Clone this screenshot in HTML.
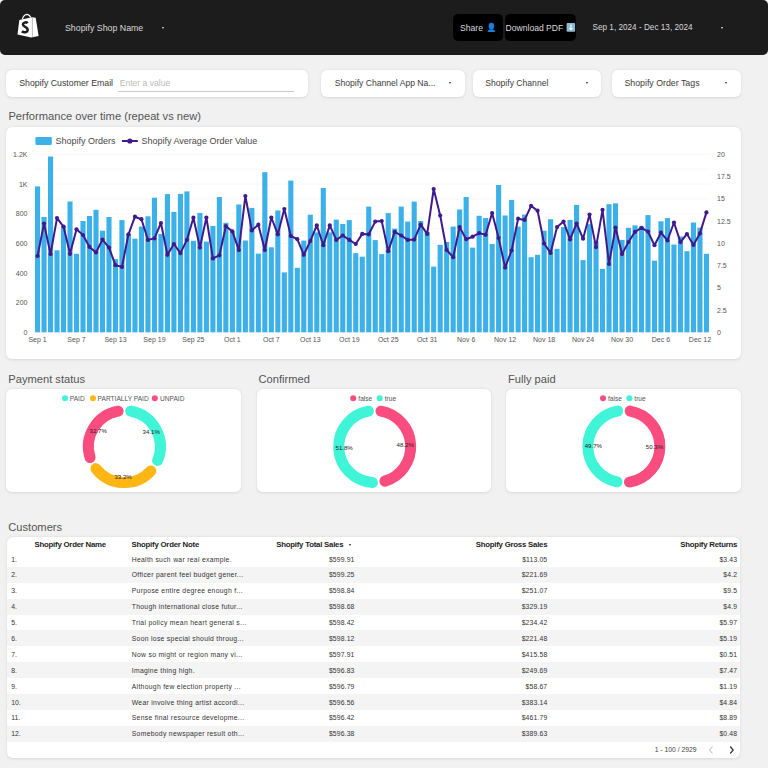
<!DOCTYPE html>
<html><head><meta charset="utf-8"><style>
*{margin:0;padding:0;box-sizing:border-box}
html,body{width:768px;height:768px;overflow:hidden;background:#f1f1f1;font-family:"Liberation Sans", sans-serif;color:#333}
.abs{position:absolute}
.hdr{position:absolute;left:0;top:0;width:768px;height:54.5px;background:#1c1c1c;border-radius:5px}
.htxt{position:absolute;color:#d8d8d8;font-size:8.6px;white-space:nowrap}
.btn{position:absolute;background:#000;border-radius:5px;top:13.8px;height:27px}
.card{position:absolute;background:#fff;border-radius:6px;box-shadow:0 0.5px 3px rgba(0,0,0,0.11)}
.ftxt{position:absolute;font-size:8.6px;color:#3a3a3a;white-space:nowrap}
.caret{position:absolute;width:0;height:0;border-left:2.2px solid transparent;border-right:2.2px solid transparent;border-top:2.6px solid #222}
.title{position:absolute;font-size:11.15px;color:#555;white-space:nowrap}
.row{position:absolute;left:6.75px;width:733.25px;height:15.89px;font-size:6.8px;color:#333}
.row span{position:absolute;top:4.5px;white-space:nowrap}
.num{left:4.5px}
.note{left:125px;letter-spacing:0.3px}
.tot{right:385.5px;letter-spacing:0.15px}
.gross{right:192.7px;letter-spacing:0.15px}
.ret{right:2.8px;letter-spacing:0.15px}
.th{position:absolute;top:539.8px;font-size:7.8px;letter-spacing:-0.22px;font-weight:bold;color:#222;white-space:nowrap}
</style></head><body>
<div class="hdr"></div>
<svg class="abs" style="left:0;top:0" width="60" height="60" viewBox="0 0 60 60">
<path d="M22.3,19.3 C23.2,16.3 24.8,14.4 26.8,14.3 C28.6,14.3 29.9,15.5 30.8,17.5" fill="none" stroke="#fff" stroke-width="1.2"/>
<path d="M19.3,19.9 L32.0,17.2 L35.7,17.8 L38.6,36.0 L31.2,37.4 L17.5,34.6 Z" fill="#fff"/>
<path d="M32.35,17.6 L32.35,37.2" stroke="#a8a8a8" stroke-width="0.8"/>
<path d="M27.7,23.2 C26.6,22.0 23.3,21.9 22.9,24.3 C22.5,26.6 27.9,27.0 27.7,30.0 C27.5,32.7 23.7,32.9 21.9,31.3" fill="none" stroke="#1c1c1c" stroke-width="2.5"/>
</svg>
<div class="htxt" style="left:65px;top:22.5px;font-size:8.8px">Shopify Shop Name</div>
<div class="caret" style="left:161.5px;top:26.8px;border-top-color:#e8e8e8;border-left-width:1.8px;border-right-width:1.8px;border-top-width:2.2px"></div>
<div class="btn" style="left:452.7px;width:50.8px"></div>
<div class="btn" style="left:504.8px;width:70.9px"></div>
<div class="htxt" style="left:460px;top:22.5px">Share</div>
<svg class="abs" style="left:480px;top:18px" width="20" height="18" viewBox="480 18 20 18"><ellipse cx="491.4" cy="26.0" rx="2.75" ry="3.3" fill="#1c7fe0"/><path d="M487.6,31.9 C487.6,30.3 489.2,29.5 490.6,29.2 L492.2,29.2 C493.6,29.5 495.2,30.3 495.2,31.9 Z" fill="#1c7fe0"/></svg>
<div class="htxt" style="left:505.5px;top:22.5px">Download PDF</div>
<svg class="abs" style="left:560px;top:18px" width="20" height="18" viewBox="560 18 20 18"><rect x="566.6" y="23.1" width="8.5" height="8.7" rx="0.8" fill="#8dbad3"/><path d="M570.85,24.6 V28.6" stroke="#e6f0f5" stroke-width="1.5"/><path d="M568.6,27.9 L573.1,27.9 L570.85,30.4 Z" fill="#fff"/></svg>
<div class="htxt" style="left:592.5px;top:22.8px;font-size:8.2px">Sep 1, 2024 - Dec 13, 2024</div>
<div class="caret" style="left:720.8px;top:26.9px;border-top-color:#e8e8e8;border-left-width:1.8px;border-right-width:1.8px;border-top-width:2.2px"></div>

<div class="card" style="left:6.25px;top:69.7px;width:301.5px;height:27.2px"></div>
<div class="ftxt" style="left:19.2px;top:78.2px;font-size:8.75px">Shopify Customer Email</div>
<div class="ftxt" style="left:119.7px;top:77.8px;color:#bbb">Enter a value</div>
<div class="abs" style="left:118.3px;top:90.8px;width:176px;height:1px;background:#cacaca"></div>
<div class="card" style="left:321px;top:69.7px;width:143.8px;height:27.2px"></div>
<div class="ftxt" style="left:334.7px;top:78.2px">Shopify Channel App Na...</div>
<div class="caret" style="left:449.2px;top:82.2px;border-left-width:1.7px;border-right-width:1.7px;border-top-width:2.2px"></div>
<div class="card" style="left:472.8px;top:69.7px;width:128.3px;height:27.2px"></div>
<div class="ftxt" style="left:485.3px;top:78.2px">Shopify Channel</div>
<div class="caret" style="left:586.2px;top:82.2px;border-left-width:1.7px;border-right-width:1.7px;border-top-width:2.2px"></div>
<div class="card" style="left:611.6px;top:69.7px;width:129.1px;height:27.2px"></div>
<div class="ftxt" style="left:624.4px;top:78.2px;font-size:8.8px">Shopify Order Tags</div>
<div class="caret" style="left:725px;top:82.2px;border-left-width:1.7px;border-right-width:1.7px;border-top-width:2.2px"></div>

<div class="title" style="left:8.4px;top:109.7px">Performance over time (repeat vs new)</div>
<div class="card" style="left:6px;top:126.6px;width:734.9px;height:232.1px"></div>
<svg width="768" height="768" style="position:absolute;left:0;top:0" font-family='"Liberation Sans", sans-serif'><line x1="34" y1="332.30" x2="710" y2="332.30" stroke="#f8f8f8" stroke-width="1"/><line x1="34" y1="317.48" x2="710" y2="317.48" stroke="#f8f8f8" stroke-width="1"/><line x1="34" y1="302.65" x2="710" y2="302.65" stroke="#f8f8f8" stroke-width="1"/><line x1="34" y1="287.82" x2="710" y2="287.82" stroke="#f8f8f8" stroke-width="1"/><line x1="34" y1="273.00" x2="710" y2="273.00" stroke="#f8f8f8" stroke-width="1"/><line x1="34" y1="258.18" x2="710" y2="258.18" stroke="#f8f8f8" stroke-width="1"/><line x1="34" y1="243.35" x2="710" y2="243.35" stroke="#f8f8f8" stroke-width="1"/><line x1="34" y1="228.53" x2="710" y2="228.53" stroke="#f8f8f8" stroke-width="1"/><line x1="34" y1="213.70" x2="710" y2="213.70" stroke="#f8f8f8" stroke-width="1"/><line x1="34" y1="198.88" x2="710" y2="198.88" stroke="#f8f8f8" stroke-width="1"/><line x1="34" y1="184.05" x2="710" y2="184.05" stroke="#f8f8f8" stroke-width="1"/><line x1="34" y1="169.22" x2="710" y2="169.22" stroke="#f8f8f8" stroke-width="1"/><line x1="34" y1="154.40" x2="710" y2="154.40" stroke="#f8f8f8" stroke-width="1"/><rect x="35.00" y="186.40" width="5.1" height="145.90" fill="#3cb0e9"/><rect x="41.49" y="217.00" width="5.1" height="115.30" fill="#3cb0e9"/><rect x="47.99" y="156.50" width="5.1" height="175.80" fill="#3cb0e9"/><rect x="54.48" y="250.30" width="5.1" height="82.00" fill="#3cb0e9"/><rect x="60.98" y="226.20" width="5.1" height="106.10" fill="#3cb0e9"/><rect x="67.47" y="201.50" width="5.1" height="130.80" fill="#3cb0e9"/><rect x="73.96" y="253.80" width="5.1" height="78.50" fill="#3cb0e9"/><rect x="80.46" y="221.00" width="5.1" height="111.30" fill="#3cb0e9"/><rect x="86.95" y="216.00" width="5.1" height="116.30" fill="#3cb0e9"/><rect x="93.45" y="209.80" width="5.1" height="122.50" fill="#3cb0e9"/><rect x="99.94" y="230.70" width="5.1" height="101.60" fill="#3cb0e9"/><rect x="106.43" y="217.00" width="5.1" height="115.30" fill="#3cb0e9"/><rect x="112.93" y="259.20" width="5.1" height="73.10" fill="#3cb0e9"/><rect x="119.42" y="220.10" width="5.1" height="112.20" fill="#3cb0e9"/><rect x="125.92" y="233.90" width="5.1" height="98.40" fill="#3cb0e9"/><rect x="132.41" y="238.70" width="5.1" height="93.60" fill="#3cb0e9"/><rect x="138.90" y="226.60" width="5.1" height="105.70" fill="#3cb0e9"/><rect x="145.40" y="216.30" width="5.1" height="116.00" fill="#3cb0e9"/><rect x="151.89" y="197.70" width="5.1" height="134.60" fill="#3cb0e9"/><rect x="158.39" y="233.90" width="5.1" height="98.40" fill="#3cb0e9"/><rect x="164.88" y="194.10" width="5.1" height="138.20" fill="#3cb0e9"/><rect x="171.37" y="211.90" width="5.1" height="120.40" fill="#3cb0e9"/><rect x="177.87" y="193.90" width="5.1" height="138.40" fill="#3cb0e9"/><rect x="184.36" y="191.40" width="5.1" height="140.90" fill="#3cb0e9"/><rect x="190.86" y="240.80" width="5.1" height="91.50" fill="#3cb0e9"/><rect x="197.35" y="212.90" width="5.1" height="119.40" fill="#3cb0e9"/><rect x="203.84" y="241.60" width="5.1" height="90.70" fill="#3cb0e9"/><rect x="210.34" y="225.90" width="5.1" height="106.40" fill="#3cb0e9"/><rect x="216.83" y="197.00" width="5.1" height="135.30" fill="#3cb0e9"/><rect x="223.33" y="222.80" width="5.1" height="109.50" fill="#3cb0e9"/><rect x="229.82" y="231.50" width="5.1" height="100.80" fill="#3cb0e9"/><rect x="236.31" y="204.50" width="5.1" height="127.80" fill="#3cb0e9"/><rect x="242.81" y="240.50" width="5.1" height="91.80" fill="#3cb0e9"/><rect x="249.30" y="207.90" width="5.1" height="124.40" fill="#3cb0e9"/><rect x="255.80" y="253.60" width="5.1" height="78.70" fill="#3cb0e9"/><rect x="262.29" y="172.20" width="5.1" height="160.10" fill="#3cb0e9"/><rect x="268.78" y="247.30" width="5.1" height="85.00" fill="#3cb0e9"/><rect x="275.28" y="210.50" width="5.1" height="121.80" fill="#3cb0e9"/><rect x="281.77" y="272.40" width="5.1" height="59.90" fill="#3cb0e9"/><rect x="288.27" y="180.60" width="5.1" height="151.70" fill="#3cb0e9"/><rect x="294.76" y="267.80" width="5.1" height="64.50" fill="#3cb0e9"/><rect x="301.25" y="240.60" width="5.1" height="91.70" fill="#3cb0e9"/><rect x="307.75" y="214.70" width="5.1" height="117.60" fill="#3cb0e9"/><rect x="314.24" y="232.40" width="5.1" height="99.90" fill="#3cb0e9"/><rect x="320.74" y="188.00" width="5.1" height="144.30" fill="#3cb0e9"/><rect x="327.23" y="232.40" width="5.1" height="99.90" fill="#3cb0e9"/><rect x="333.72" y="219.60" width="5.1" height="112.70" fill="#3cb0e9"/><rect x="340.22" y="224.00" width="5.1" height="108.30" fill="#3cb0e9"/><rect x="346.71" y="220.10" width="5.1" height="112.20" fill="#3cb0e9"/><rect x="353.21" y="253.10" width="5.1" height="79.20" fill="#3cb0e9"/><rect x="359.70" y="256.70" width="5.1" height="75.60" fill="#3cb0e9"/><rect x="366.19" y="206.60" width="5.1" height="125.70" fill="#3cb0e9"/><rect x="372.69" y="240.10" width="5.1" height="92.20" fill="#3cb0e9"/><rect x="379.18" y="254.10" width="5.1" height="78.20" fill="#3cb0e9"/><rect x="385.68" y="213.10" width="5.1" height="119.20" fill="#3cb0e9"/><rect x="392.17" y="228.60" width="5.1" height="103.70" fill="#3cb0e9"/><rect x="398.66" y="206.60" width="5.1" height="125.70" fill="#3cb0e9"/><rect x="405.16" y="221.60" width="5.1" height="110.70" fill="#3cb0e9"/><rect x="411.65" y="201.60" width="5.1" height="130.70" fill="#3cb0e9"/><rect x="418.15" y="221.00" width="5.1" height="111.30" fill="#3cb0e9"/><rect x="424.64" y="232.00" width="5.1" height="100.30" fill="#3cb0e9"/><rect x="431.13" y="266.60" width="5.1" height="65.70" fill="#3cb0e9"/><rect x="437.63" y="244.80" width="5.1" height="87.50" fill="#3cb0e9"/><rect x="444.12" y="242.00" width="5.1" height="90.30" fill="#3cb0e9"/><rect x="450.62" y="226.60" width="5.1" height="105.70" fill="#3cb0e9"/><rect x="457.11" y="209.50" width="5.1" height="122.80" fill="#3cb0e9"/><rect x="463.60" y="197.00" width="5.1" height="135.30" fill="#3cb0e9"/><rect x="470.10" y="247.60" width="5.1" height="84.70" fill="#3cb0e9"/><rect x="476.59" y="215.80" width="5.1" height="116.50" fill="#3cb0e9"/><rect x="483.09" y="218.00" width="5.1" height="114.30" fill="#3cb0e9"/><rect x="489.58" y="244.00" width="5.1" height="88.30" fill="#3cb0e9"/><rect x="496.07" y="185.00" width="5.1" height="147.30" fill="#3cb0e9"/><rect x="502.57" y="215.50" width="5.1" height="116.80" fill="#3cb0e9"/><rect x="509.06" y="199.90" width="5.1" height="132.40" fill="#3cb0e9"/><rect x="515.56" y="226.60" width="5.1" height="105.70" fill="#3cb0e9"/><rect x="522.05" y="214.60" width="5.1" height="117.70" fill="#3cb0e9"/><rect x="528.54" y="257.20" width="5.1" height="75.10" fill="#3cb0e9"/><rect x="535.04" y="254.80" width="5.1" height="77.50" fill="#3cb0e9"/><rect x="541.53" y="230.70" width="5.1" height="101.60" fill="#3cb0e9"/><rect x="548.03" y="219.20" width="5.1" height="113.10" fill="#3cb0e9"/><rect x="554.52" y="248.80" width="5.1" height="83.50" fill="#3cb0e9"/><rect x="561.01" y="227.10" width="5.1" height="105.20" fill="#3cb0e9"/><rect x="567.51" y="219.90" width="5.1" height="112.40" fill="#3cb0e9"/><rect x="574.00" y="204.90" width="5.1" height="127.40" fill="#3cb0e9"/><rect x="580.50" y="260.10" width="5.1" height="72.20" fill="#3cb0e9"/><rect x="586.99" y="224.20" width="5.1" height="108.10" fill="#3cb0e9"/><rect x="593.48" y="241.30" width="5.1" height="91.00" fill="#3cb0e9"/><rect x="599.98" y="268.90" width="5.1" height="63.40" fill="#3cb0e9"/><rect x="606.47" y="204.20" width="5.1" height="128.10" fill="#3cb0e9"/><rect x="612.97" y="203.40" width="5.1" height="128.90" fill="#3cb0e9"/><rect x="619.46" y="239.90" width="5.1" height="92.40" fill="#3cb0e9"/><rect x="625.95" y="227.80" width="5.1" height="104.50" fill="#3cb0e9"/><rect x="632.45" y="225.40" width="5.1" height="106.90" fill="#3cb0e9"/><rect x="638.94" y="226.60" width="5.1" height="105.70" fill="#3cb0e9"/><rect x="645.44" y="215.10" width="5.1" height="117.20" fill="#3cb0e9"/><rect x="651.93" y="260.70" width="5.1" height="71.60" fill="#3cb0e9"/><rect x="658.42" y="221.30" width="5.1" height="111.00" fill="#3cb0e9"/><rect x="664.92" y="218.10" width="5.1" height="114.20" fill="#3cb0e9"/><rect x="671.41" y="244.60" width="5.1" height="87.70" fill="#3cb0e9"/><rect x="677.91" y="236.50" width="5.1" height="95.80" fill="#3cb0e9"/><rect x="684.40" y="251.20" width="5.1" height="81.10" fill="#3cb0e9"/><rect x="690.89" y="222.50" width="5.1" height="109.80" fill="#3cb0e9"/><rect x="697.39" y="227.60" width="5.1" height="104.70" fill="#3cb0e9"/><rect x="703.88" y="253.80" width="5.1" height="78.50" fill="#3cb0e9"/><polyline points="37.55,256.00 44.04,223.50 50.54,254.10 57.03,218.10 63.53,226.60 70.02,253.80 76.51,229.30 83.01,235.00 89.50,246.90 96.00,252.40 102.49,239.60 108.98,247.60 115.48,265.20 121.97,266.90 128.47,234.30 134.96,216.70 141.45,219.20 147.95,239.90 154.44,238.40 160.94,223.00 167.43,254.80 173.92,244.00 180.42,253.10 186.91,239.90 193.41,217.70 199.90,247.60 206.39,217.50 212.89,258.40 219.38,255.30 225.88,226.20 232.37,231.40 238.86,250.10 245.36,196.00 251.85,230.40 258.35,224.70 264.84,250.00 271.33,217.50 277.83,234.30 284.32,209.00 290.82,236.00 297.31,239.20 303.80,254.80 310.30,241.10 316.79,225.40 323.29,245.20 329.78,225.40 336.27,239.90 342.77,235.50 349.26,239.90 355.76,244.00 362.25,233.90 368.74,234.30 375.24,221.60 381.73,221.10 388.23,251.20 394.72,231.90 401.21,235.50 407.71,239.90 414.20,239.60 420.70,224.70 427.19,233.90 433.68,189.00 440.18,215.50 446.67,250.00 453.17,257.20 459.66,227.10 466.15,239.20 472.65,236.70 479.14,233.10 485.64,234.80 492.13,213.10 498.62,238.00 505.12,267.60 511.61,250.50 518.11,218.70 524.60,219.90 531.09,205.90 537.59,210.70 544.08,243.50 550.58,252.90 557.07,227.10 563.56,221.60 570.06,239.40 576.55,223.50 583.05,238.70 589.54,214.60 596.03,247.10 602.53,209.80 609.02,264.00 615.52,227.60 622.01,254.10 628.50,242.00 635.00,231.90 641.49,227.80 647.99,231.60 654.48,245.20 660.97,232.70 667.47,240.50 673.96,222.50 680.46,242.10 686.95,234.00 693.44,244.90 699.94,233.40 706.43,212.40" fill="none" stroke="#401a8c" stroke-width="2" stroke-linejoin="round"/><circle cx="37.55" cy="256.00" r="2.1" fill="#401a8c"/><circle cx="44.04" cy="223.50" r="2.1" fill="#401a8c"/><circle cx="50.54" cy="254.10" r="2.1" fill="#401a8c"/><circle cx="57.03" cy="218.10" r="2.1" fill="#401a8c"/><circle cx="63.53" cy="226.60" r="2.1" fill="#401a8c"/><circle cx="70.02" cy="253.80" r="2.1" fill="#401a8c"/><circle cx="76.51" cy="229.30" r="2.1" fill="#401a8c"/><circle cx="83.01" cy="235.00" r="2.1" fill="#401a8c"/><circle cx="89.50" cy="246.90" r="2.1" fill="#401a8c"/><circle cx="96.00" cy="252.40" r="2.1" fill="#401a8c"/><circle cx="102.49" cy="239.60" r="2.1" fill="#401a8c"/><circle cx="108.98" cy="247.60" r="2.1" fill="#401a8c"/><circle cx="115.48" cy="265.20" r="2.1" fill="#401a8c"/><circle cx="121.97" cy="266.90" r="2.1" fill="#401a8c"/><circle cx="128.47" cy="234.30" r="2.1" fill="#401a8c"/><circle cx="134.96" cy="216.70" r="2.1" fill="#401a8c"/><circle cx="141.45" cy="219.20" r="2.1" fill="#401a8c"/><circle cx="147.95" cy="239.90" r="2.1" fill="#401a8c"/><circle cx="154.44" cy="238.40" r="2.1" fill="#401a8c"/><circle cx="160.94" cy="223.00" r="2.1" fill="#401a8c"/><circle cx="167.43" cy="254.80" r="2.1" fill="#401a8c"/><circle cx="173.92" cy="244.00" r="2.1" fill="#401a8c"/><circle cx="180.42" cy="253.10" r="2.1" fill="#401a8c"/><circle cx="186.91" cy="239.90" r="2.1" fill="#401a8c"/><circle cx="193.41" cy="217.70" r="2.1" fill="#401a8c"/><circle cx="199.90" cy="247.60" r="2.1" fill="#401a8c"/><circle cx="206.39" cy="217.50" r="2.1" fill="#401a8c"/><circle cx="212.89" cy="258.40" r="2.1" fill="#401a8c"/><circle cx="219.38" cy="255.30" r="2.1" fill="#401a8c"/><circle cx="225.88" cy="226.20" r="2.1" fill="#401a8c"/><circle cx="232.37" cy="231.40" r="2.1" fill="#401a8c"/><circle cx="238.86" cy="250.10" r="2.1" fill="#401a8c"/><circle cx="245.36" cy="196.00" r="2.1" fill="#401a8c"/><circle cx="251.85" cy="230.40" r="2.1" fill="#401a8c"/><circle cx="258.35" cy="224.70" r="2.1" fill="#401a8c"/><circle cx="264.84" cy="250.00" r="2.1" fill="#401a8c"/><circle cx="271.33" cy="217.50" r="2.1" fill="#401a8c"/><circle cx="277.83" cy="234.30" r="2.1" fill="#401a8c"/><circle cx="284.32" cy="209.00" r="2.1" fill="#401a8c"/><circle cx="290.82" cy="236.00" r="2.1" fill="#401a8c"/><circle cx="297.31" cy="239.20" r="2.1" fill="#401a8c"/><circle cx="303.80" cy="254.80" r="2.1" fill="#401a8c"/><circle cx="310.30" cy="241.10" r="2.1" fill="#401a8c"/><circle cx="316.79" cy="225.40" r="2.1" fill="#401a8c"/><circle cx="323.29" cy="245.20" r="2.1" fill="#401a8c"/><circle cx="329.78" cy="225.40" r="2.1" fill="#401a8c"/><circle cx="336.27" cy="239.90" r="2.1" fill="#401a8c"/><circle cx="342.77" cy="235.50" r="2.1" fill="#401a8c"/><circle cx="349.26" cy="239.90" r="2.1" fill="#401a8c"/><circle cx="355.76" cy="244.00" r="2.1" fill="#401a8c"/><circle cx="362.25" cy="233.90" r="2.1" fill="#401a8c"/><circle cx="368.74" cy="234.30" r="2.1" fill="#401a8c"/><circle cx="375.24" cy="221.60" r="2.1" fill="#401a8c"/><circle cx="381.73" cy="221.10" r="2.1" fill="#401a8c"/><circle cx="388.23" cy="251.20" r="2.1" fill="#401a8c"/><circle cx="394.72" cy="231.90" r="2.1" fill="#401a8c"/><circle cx="401.21" cy="235.50" r="2.1" fill="#401a8c"/><circle cx="407.71" cy="239.90" r="2.1" fill="#401a8c"/><circle cx="414.20" cy="239.60" r="2.1" fill="#401a8c"/><circle cx="420.70" cy="224.70" r="2.1" fill="#401a8c"/><circle cx="427.19" cy="233.90" r="2.1" fill="#401a8c"/><circle cx="433.68" cy="189.00" r="2.1" fill="#401a8c"/><circle cx="440.18" cy="215.50" r="2.1" fill="#401a8c"/><circle cx="446.67" cy="250.00" r="2.1" fill="#401a8c"/><circle cx="453.17" cy="257.20" r="2.1" fill="#401a8c"/><circle cx="459.66" cy="227.10" r="2.1" fill="#401a8c"/><circle cx="466.15" cy="239.20" r="2.1" fill="#401a8c"/><circle cx="472.65" cy="236.70" r="2.1" fill="#401a8c"/><circle cx="479.14" cy="233.10" r="2.1" fill="#401a8c"/><circle cx="485.64" cy="234.80" r="2.1" fill="#401a8c"/><circle cx="492.13" cy="213.10" r="2.1" fill="#401a8c"/><circle cx="498.62" cy="238.00" r="2.1" fill="#401a8c"/><circle cx="505.12" cy="267.60" r="2.1" fill="#401a8c"/><circle cx="511.61" cy="250.50" r="2.1" fill="#401a8c"/><circle cx="518.11" cy="218.70" r="2.1" fill="#401a8c"/><circle cx="524.60" cy="219.90" r="2.1" fill="#401a8c"/><circle cx="531.09" cy="205.90" r="2.1" fill="#401a8c"/><circle cx="537.59" cy="210.70" r="2.1" fill="#401a8c"/><circle cx="544.08" cy="243.50" r="2.1" fill="#401a8c"/><circle cx="550.58" cy="252.90" r="2.1" fill="#401a8c"/><circle cx="557.07" cy="227.10" r="2.1" fill="#401a8c"/><circle cx="563.56" cy="221.60" r="2.1" fill="#401a8c"/><circle cx="570.06" cy="239.40" r="2.1" fill="#401a8c"/><circle cx="576.55" cy="223.50" r="2.1" fill="#401a8c"/><circle cx="583.05" cy="238.70" r="2.1" fill="#401a8c"/><circle cx="589.54" cy="214.60" r="2.1" fill="#401a8c"/><circle cx="596.03" cy="247.10" r="2.1" fill="#401a8c"/><circle cx="602.53" cy="209.80" r="2.1" fill="#401a8c"/><circle cx="609.02" cy="264.00" r="2.1" fill="#401a8c"/><circle cx="615.52" cy="227.60" r="2.1" fill="#401a8c"/><circle cx="622.01" cy="254.10" r="2.1" fill="#401a8c"/><circle cx="628.50" cy="242.00" r="2.1" fill="#401a8c"/><circle cx="635.00" cy="231.90" r="2.1" fill="#401a8c"/><circle cx="641.49" cy="227.80" r="2.1" fill="#401a8c"/><circle cx="647.99" cy="231.60" r="2.1" fill="#401a8c"/><circle cx="654.48" cy="245.20" r="2.1" fill="#401a8c"/><circle cx="660.97" cy="232.70" r="2.1" fill="#401a8c"/><circle cx="667.47" cy="240.50" r="2.1" fill="#401a8c"/><circle cx="673.96" cy="222.50" r="2.1" fill="#401a8c"/><circle cx="680.46" cy="242.10" r="2.1" fill="#401a8c"/><circle cx="686.95" cy="234.00" r="2.1" fill="#401a8c"/><circle cx="693.44" cy="244.90" r="2.1" fill="#401a8c"/><circle cx="699.94" cy="233.40" r="2.1" fill="#401a8c"/><circle cx="706.43" cy="212.40" r="2.1" fill="#401a8c"/><text x="27.5" y="334.80" text-anchor="end" font-size="7.0" fill="#555">0</text><text x="27.5" y="305.15" text-anchor="end" font-size="7.0" fill="#555">200</text><text x="27.5" y="275.50" text-anchor="end" font-size="7.0" fill="#555">400</text><text x="27.5" y="245.85" text-anchor="end" font-size="7.0" fill="#555">600</text><text x="27.5" y="216.20" text-anchor="end" font-size="7.0" fill="#555">800</text><text x="27.5" y="186.55" text-anchor="end" font-size="7.0" fill="#555">1K</text><text x="27.5" y="156.90" text-anchor="end" font-size="7.0" fill="#555">1.2K</text><text x="717" y="334.80" font-size="7.0" fill="#555">0</text><text x="717" y="312.56" font-size="7.0" fill="#555">2.5</text><text x="717" y="290.32" font-size="7.0" fill="#555">5</text><text x="717" y="268.09" font-size="7.0" fill="#555">7.5</text><text x="717" y="245.85" font-size="7.0" fill="#555">10</text><text x="717" y="223.61" font-size="7.0" fill="#555">12.5</text><text x="717" y="201.38" font-size="7.0" fill="#555">15</text><text x="717" y="179.14" font-size="7.0" fill="#555">17.5</text><text x="717" y="156.90" font-size="7.0" fill="#555">20</text><text x="37.55" y="342.3" text-anchor="middle" font-size="7.0" fill="#555">Sep 1</text><text x="76.51" y="342.3" text-anchor="middle" font-size="7.0" fill="#555">Sep 7</text><text x="115.48" y="342.3" text-anchor="middle" font-size="7.0" fill="#555">Sep 13</text><text x="154.44" y="342.3" text-anchor="middle" font-size="7.0" fill="#555">Sep 19</text><text x="193.41" y="342.3" text-anchor="middle" font-size="7.0" fill="#555">Sep 25</text><text x="232.37" y="342.3" text-anchor="middle" font-size="7.0" fill="#555">Oct 1</text><text x="271.33" y="342.3" text-anchor="middle" font-size="7.0" fill="#555">Oct 7</text><text x="310.30" y="342.3" text-anchor="middle" font-size="7.0" fill="#555">Oct 13</text><text x="349.26" y="342.3" text-anchor="middle" font-size="7.0" fill="#555">Oct 19</text><text x="388.23" y="342.3" text-anchor="middle" font-size="7.0" fill="#555">Oct 25</text><text x="427.19" y="342.3" text-anchor="middle" font-size="7.0" fill="#555">Oct 31</text><text x="466.15" y="342.3" text-anchor="middle" font-size="7.0" fill="#555">Nov 6</text><text x="505.12" y="342.3" text-anchor="middle" font-size="7.0" fill="#555">Nov 12</text><text x="544.08" y="342.3" text-anchor="middle" font-size="7.0" fill="#555">Nov 18</text><text x="583.05" y="342.3" text-anchor="middle" font-size="7.0" fill="#555">Nov 24</text><text x="622.01" y="342.3" text-anchor="middle" font-size="7.0" fill="#555">Nov 30</text><text x="660.97" y="342.3" text-anchor="middle" font-size="7.0" fill="#555">Dec 6</text><text x="699.94" y="342.3" text-anchor="middle" font-size="7.0" fill="#555">Dec 12</text><rect x="35.4" y="137" width="16.4" height="8" rx="1.2" fill="#3cb0e9"/><text x="55.4" y="144.2" font-size="9" fill="#4a4a4a">Shopify Orders</text><line x1="122" y1="141" x2="137.8" y2="141" stroke="#401a8c" stroke-width="2"/><circle cx="129.9" cy="141" r="2.6" fill="#401a8c"/><text x="141.5" y="144.2" font-size="9" fill="#4a4a4a">Shopify Average Order Value</text></svg>

<div class="title" style="left:8.3px;top:372.8px">Payment status</div>
<div class="title" style="left:258.5px;top:372.8px">Confirmed</div>
<div class="title" style="left:508px;top:372.8px">Fully paid</div>
<div class="card" style="left:6px;top:389.2px;width:234.8px;height:102.9px"></div>
<div class="card" style="left:256.8px;top:389.2px;width:234.4px;height:102.9px"></div>
<div class="card" style="left:505.9px;top:389.2px;width:234.8px;height:102.9px"></div>
<svg width="768" height="768" style="position:absolute;left:0;top:0" font-family='"Liberation Sans", sans-serif'><path d="M130.65,411.15 A36,36 0 0 1 157.60,460.53" fill="none" stroke="#3ff4d7" stroke-width="11" stroke-linecap="round"/><path d="M150.83,471.04 A36,36 0 0 1 95.92,468.62" fill="none" stroke="#fdb614" stroke-width="11" stroke-linecap="round"/><path d="M90.11,457.56 A36,36 0 0 1 118.15,411.15" fill="none" stroke="#f94d7f" stroke-width="11" stroke-linecap="round"/><text x="151.26" y="434.04" text-anchor="middle" font-size="6.1" fill="#222">34.1%</text><text x="123.05" y="479.27" text-anchor="middle" font-size="6.1" fill="#222">33.2%</text><text x="98.21" y="432.88" text-anchor="middle" font-size="6.1" fill="#222">32.7%</text><path d="M380.95,411.15 A36,36 0 0 1 384.91,481.12" fill="none" stroke="#f94d7f" stroke-width="11" stroke-linecap="round"/><path d="M372.49,482.53 A36,36 0 0 1 368.45,411.15" fill="none" stroke="#3ff4d7" stroke-width="11" stroke-linecap="round"/><text x="405.25" y="446.97" text-anchor="middle" font-size="6.1" fill="#222">48.2%</text><text x="344.15" y="450.43" text-anchor="middle" font-size="6.1" fill="#222">51.8%</text><path d="M630.15,411.05 A36,36 0 0 1 629.48,482.06" fill="none" stroke="#f94d7f" stroke-width="11" stroke-linecap="round"/><path d="M616.98,481.83 A36,36 0 0 1 617.65,411.05" fill="none" stroke="#3ff4d7" stroke-width="11" stroke-linecap="round"/><text x="654.50" y="448.89" text-anchor="middle" font-size="6.1" fill="#222">50.3%</text><text x="593.30" y="448.31" text-anchor="middle" font-size="6.1" fill="#222">49.7%</text><circle cx="65" cy="398.2" r="3" fill="#3ff4d7"/><text x="69.8" y="400.5" font-size="6.6" fill="#555">PAID</text><circle cx="93" cy="398.2" r="3" fill="#fdb614"/><text x="97.6" y="400.5" font-size="6.6" fill="#555">PARTIALLY PAID</text><circle cx="154.8" cy="398.2" r="3" fill="#f94d7f"/><text x="160" y="400.5" font-size="6.6" fill="#555">UNPAID</text><circle cx="353.2" cy="398.2" r="3" fill="#f94d7f"/><text x="358.3" y="400.5" font-size="6.6" fill="#555">false</text><circle cx="379.7" cy="398.2" r="3" fill="#3ff4d7"/><text x="384.7" y="400.5" font-size="6.6" fill="#555">true</text><circle cx="603" cy="398.2" r="3" fill="#f94d7f"/><text x="608" y="400.5" font-size="6.6" fill="#555">false</text><circle cx="629.4" cy="398.2" r="3" fill="#3ff4d7"/><text x="634.3" y="400.5" font-size="6.6" fill="#555">true</text></svg>

<div class="title" style="left:8.25px;top:520.8px">Customers</div>
<div class="card" style="left:6.75px;top:537px;width:733.25px;height:221px"></div>
<div class="th" style="left:34.5px">Shopify Order Name</div>
<div class="th" style="left:131.5px">Shopify Order Note</div>
<div class="th" style="left:276.2px">Shopify Total Sales</div>
<div class="caret" style="left:348.6px;top:544px;border-left-width:1.9px;border-right-width:1.9px;border-top-width:2.3px"></div>
<div class="th" style="right:220.7px">Shopify Gross Sales</div>
<div class="th" style="right:30.8px">Shopify Returns</div>
<div class="row" style="top:551.00px;background:#fff"><span class="num">1.</span><span class="note">Health such war real example.</span><span class="tot">$599.91</span><span class="gross">$113.05</span><span class="ret">$3.43</span></div><div class="row" style="top:566.89px;background:#f4f4f4"><span class="num">2.</span><span class="note">Officer parent feel budget gener...</span><span class="tot">$599.25</span><span class="gross">$221.69</span><span class="ret">$4.2</span></div><div class="row" style="top:582.78px;background:#fff"><span class="num">3.</span><span class="note">Purpose entire degree enough f...</span><span class="tot">$598.84</span><span class="gross">$251.07</span><span class="ret">$9.5</span></div><div class="row" style="top:598.67px;background:#f4f4f4"><span class="num">4.</span><span class="note">Though international close futur...</span><span class="tot">$598.68</span><span class="gross">$329.19</span><span class="ret">$4.9</span></div><div class="row" style="top:614.56px;background:#fff"><span class="num">5.</span><span class="note">Trial policy mean heart general s...</span><span class="tot">$598.42</span><span class="gross">$234.42</span><span class="ret">$5.97</span></div><div class="row" style="top:630.45px;background:#f4f4f4"><span class="num">6.</span><span class="note">Soon lose special should throug...</span><span class="tot">$598.12</span><span class="gross">$221.48</span><span class="ret">$5.19</span></div><div class="row" style="top:646.34px;background:#fff"><span class="num">7.</span><span class="note">Now so might or region many vi...</span><span class="tot">$597.91</span><span class="gross">$415.58</span><span class="ret">$0.51</span></div><div class="row" style="top:662.23px;background:#f4f4f4"><span class="num">8.</span><span class="note">Imagine thing high.</span><span class="tot">$596.83</span><span class="gross">$249.69</span><span class="ret">$7.47</span></div><div class="row" style="top:678.12px;background:#fff"><span class="num">9.</span><span class="note">Although few election property ...</span><span class="tot">$596.79</span><span class="gross">$58.67</span><span class="ret">$1.19</span></div><div class="row" style="top:694.01px;background:#f4f4f4"><span class="num">10.</span><span class="note">Wear involve thing artist accordi...</span><span class="tot">$596.56</span><span class="gross">$383.14</span><span class="ret">$4.84</span></div><div class="row" style="top:709.90px;background:#fff"><span class="num">11.</span><span class="note">Sense final resource developme...</span><span class="tot">$596.42</span><span class="gross">$461.79</span><span class="ret">$8.89</span></div><div class="row" style="top:725.79px;background:#f4f4f4"><span class="num">12.</span><span class="note">Somebody newspaper result oth...</span><span class="tot">$596.38</span><span class="gross">$389.63</span><span class="ret">$0.48</span></div>
<div class="abs" style="left:654.7px;top:745.5px;font-size:6.8px;color:#444;white-space:nowrap">1 - 100 / 2929</div>
<svg class="abs" style="left:707px;top:745px" width="30" height="10" viewBox="0 0 30 10"><path d="M5.5,1.5 L2.5,5 L5.5,8.5" stroke="#bbb" stroke-width="1" fill="none"/><path d="M23.2,1.5 L26.2,5 L23.2,8.5" stroke="#333" stroke-width="1.2" fill="none"/></svg>
</body></html>
